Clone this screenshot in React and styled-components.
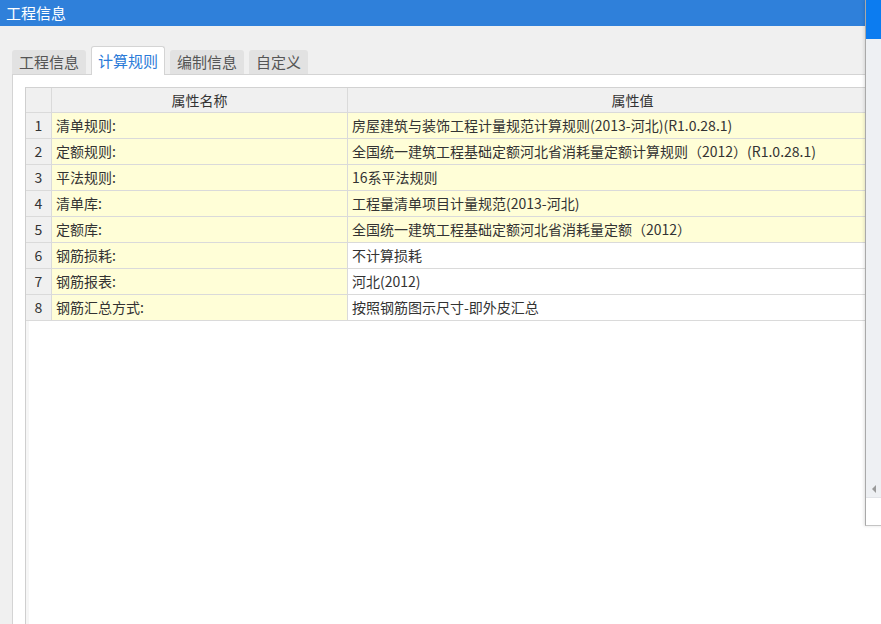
import React from 'react';
import styled, { createGlobalStyle } from 'styled-components';

const GlobalStyle = createGlobalStyle`
  html, body {
    margin: 0;
    padding: 0;
    overflow: hidden;
    background: #f0f0f0;
  }
  body {
    font-family: "Noto Sans CJK SC", "Noto Sans", sans-serif;
  }
`;

const Page = styled.div`
  position: relative;
  width: 881px;
  height: 624px;
  overflow: hidden;
  background: #f0f0f0;
  display: flex;
  flex-direction: column;
`;

const TitleBar = styled.div`
  height: 26px;
  flex: none;
  background: #2f80da;
  color: #ffffff;
  font-size: 15px;
  line-height: 25px;
  padding-left: 6px;
`;

const TabBar = styled.div`
  display: flex;
  align-items: flex-end;
  gap: 5px;
  padding: 20px 0 0 12px;
  flex: none;
  position: relative;
  z-index: 1;
`;

const Tab = styled.div`
  box-sizing: border-box;
  height: ${p => (p.$active ? '29px' : '24px')};
  padding: ${p => (p.$active ? '0 6px' : '0 7px')};
  font-size: 15px;
  line-height: ${p => (p.$active ? '27px' : '24px')};
  color: ${p => (p.$active ? '#2b7bd8' : '#555555')};
  background: ${p => (p.$active ? '#ffffff' : '#e2e2e2')};
  border: ${p => (p.$active ? '1px solid #d4d4d4' : 'none')};
  border-bottom: none;
  border-radius: 3px 3px 0 0;
  margin-bottom: ${p => (p.$active ? '-1px' : '0')};
`;

const Panel = styled.div`
  flex: 1;
  display: flex;
  margin-left: 12px;
  padding: 12px 0 0 12px;
  background: #ffffff;
  border: 1px solid #d4d4d4;
  border-right: none;
  border-bottom: none;
`;

const GridBox = styled.div`
  flex: 1;
  background: #ffffff;
  border-top: 1px solid #d2d2d2;
  border-left: 1px solid #cfcfcf;
  box-shadow: inset 3px 0 0 #f6f6f6;
  overflow: hidden;
`;

const Row = styled.div`
  display: grid;
  grid-template-columns: 26px 296px 570px;
`;

const Cell = styled.div`
  box-sizing: border-box;
  height: ${p => (p.$head ? '25px' : '26px')};
  line-height: ${p => (p.$head ? '24px' : '25px')};
  font-size: 14px;
  color: #333333;
  white-space: nowrap;
  overflow: hidden;
  padding: 0 4px;
  border-right: 1px solid #dadada;
  border-bottom: 1px solid #dadada;
  text-align: ${p => p.$align || 'left'};
  background: ${p => p.$bg || '#ffffff'};
`;

const Overlay = styled.div`
  position: absolute;
  left: 865px;
  top: 0;
  width: 40px;
  height: 525px;
  display: flex;
  flex-direction: column;
  border-left: 1px solid #a9a9a9;
  border-bottom: 1px solid #c4c4c4;
  box-shadow: -1px 0 3px rgba(0, 0, 0, 0.12);
  background: #ffffff;
`;

const OverlayHead = styled.div`
  height: 39px;
  flex: none;
  background: #0c7cf0;
`;

const OverlayBody = styled.div`
  flex: 1;
  background: #eef0f3;
  display: flex;
  align-items: flex-end;
  padding: 0 0 4px 6px;
  border-bottom: 1px solid #e2e4e8;
`;

const Arrow = styled.div`
  width: 0;
  height: 0;
  border-top: 4px solid transparent;
  border-bottom: 4px solid transparent;
  border-right: 4px solid #9a9a9a;
`;

const OverlayFoot = styled.div`
  height: 27px;
  flex: none;
  background: #ffffff;
`;

const YELLOW = '#fffed7';
const GRAY = '#f0f0f0';

const rows = [
  ['清单规则:', '房屋建筑与装饰工程计量规范计算规则(2013-河北)(R1.0.28.1)', true],
  ['定额规则:', '全国统一建筑工程基础定额河北省消耗量定额计算规则（2012）(R1.0.28.1)', true],
  ['平法规则:', '16系平法规则', true],
  ['清单库:', '工程量清单项目计量规范(2013-河北)', true],
  ['定额库:', '全国统一建筑工程基础定额河北省消耗量定额（2012）', true],
  ['钢筋损耗:', '不计算损耗', false],
  ['钢筋报表:', '河北(2012)', false],
  ['钢筋汇总方式:', '按照钢筋图示尺寸-即外皮汇总', false]
];

const tabs = ['工程信息', '计算规则', '编制信息', '自定义'];

export default function App() {
  return (
    <React.Fragment>
      <GlobalStyle />
      <Page>
        <TitleBar>工程信息</TitleBar>
        <TabBar>
          {tabs.map((t, i) => (
            <Tab key={t} $active={i === 1}>{t}</Tab>
          ))}
        </TabBar>
        <Panel>
          <GridBox>
            <Row>
              <Cell $head $bg={GRAY} />
              <Cell $head $bg={GRAY} $align="center">属性名称</Cell>
              <Cell $head $bg={GRAY} $align="center">属性值</Cell>
            </Row>
            {rows.map(([name, value, yellow], i) => (
              <Row key={name}>
                <Cell $bg={GRAY} $align="center">{i + 1}</Cell>
                <Cell $bg={YELLOW}>{name}</Cell>
                <Cell $bg={yellow ? YELLOW : '#ffffff'}>{value}</Cell>
              </Row>
            ))}
          </GridBox>
        </Panel>
        <Overlay>
          <OverlayHead />
          <OverlayBody>
            <Arrow />
          </OverlayBody>
          <OverlayFoot />
        </Overlay>
      </Page>
    </React.Fragment>
  );
}
